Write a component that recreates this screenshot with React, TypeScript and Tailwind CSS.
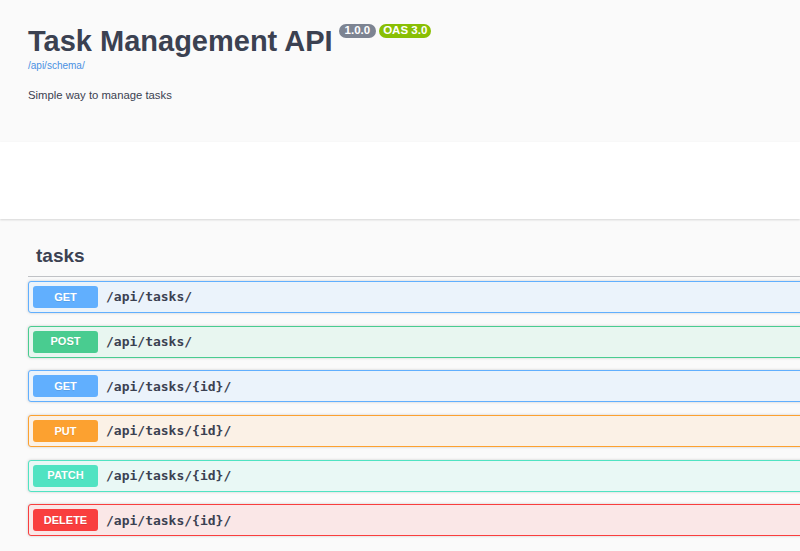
import React from 'react';

type Op = {
  method: string;
  path: string;
  color: string;
};

const ops: Op[] = [
  { method: 'GET', path: '/api/tasks/', color: 'get' },
  { method: 'POST', path: '/api/tasks/', color: 'post' },
  { method: 'GET', path: '/api/tasks/{id}/', color: 'get' },
  { method: 'PUT', path: '/api/tasks/{id}/', color: 'put' },
  { method: 'PATCH', path: '/api/tasks/{id}/', color: 'patch' },
  { method: 'DELETE', path: '/api/tasks/{id}/', color: 'delete' },
];

const blockStyles: Record<string, { block: string; badge: string }> = {
  get: { block: 'border-[#61affe] bg-[#ebf3fb]', badge: 'bg-[#61affe]' },
  post: { block: 'border-[#49cc90] bg-[#e8f6f0]', badge: 'bg-[#49cc90]' },
  put: { block: 'border-[#fca130] bg-[#fbf1e6]', badge: 'bg-[#fca130]' },
  patch: { block: 'border-[#50e3c2] bg-[#e9f8f5]', badge: 'bg-[#50e3c2]' },
  delete: { block: 'border-[#f93e3e] bg-[#fae7e7]', badge: 'bg-[#f93e3e]' },
};

const OpBlock: React.FC<{ op: Op }> = ({ op }) => {
  const s = blockStyles[op.color];
  return (
    <div
      className={`mb-[12.67px] flex h-[32px] items-center rounded-[3px] border p-[4px] shadow-[0_0_3px_rgba(0,0,0,0.19)] ${s.block}`}
    >
      <span
        className={`flex h-[22px] w-[65px] items-center justify-center rounded-[3px] text-[11px] font-bold text-white [text-shadow:0_1px_0_rgba(0,0,0,0.1)] ${s.badge}`}
      >
        {op.method}
      </span>
      <span className="ml-[8px] font-['DejaVu_Sans_Mono',monospace] text-[13px] font-bold text-[#3b4151]">
        {op.path}
      </span>
    </div>
  );
};

export default function App() {
  return (
    <div className="h-[551px] w-[800px] overflow-hidden bg-[#fafafa] font-['Liberation_Sans',Arial,sans-serif] text-[#3b4151]">
      {/* Info header */}
      <div className="h-[142px] bg-[#fafafa] pl-[28px] pt-[23px]">
        <div className="flex items-start">
          <h1 className="text-[29px] font-bold leading-[36px]">Task Management API</h1>
          <span className="ml-[6px] mt-[1px] flex h-[14px] items-center rounded-full bg-[#7d8492] px-[6px] text-[11.5px] font-bold text-white">
            1.0.0
          </span>
          <span className="ml-[3px] mt-[1px] flex h-[14px] items-center rounded-full bg-[#89bf04] px-[4px] text-[11.5px] font-bold text-white">
            OAS 3.0
          </span>
        </div>
        <a className="block text-[10px] leading-[14px] text-[#4990e2]">/api/schema/</a>
        <p className="mt-[14px] text-[11.3px] leading-[16px]">Simple way to manage tasks</p>
      </div>

      {/* Scheme container */}
      <div className="h-[77px] bg-white shadow-[0_1px_2px_0_rgba(0,0,0,0.15)]" />

      {/* Operations */}
      <div className="w-[1400px] px-[28px] pt-[17px]">
        <h3 className="mb-[4px] border-b border-[rgba(59,65,81,0.3)] px-[8px] pb-[8px] pt-[8px] text-[19px] font-bold leading-[24px]">
          tasks
        </h3>
        {ops.map((op, i) => (
          <OpBlock key={i} op={op} />
        ))}
      </div>
    </div>
  );
}
